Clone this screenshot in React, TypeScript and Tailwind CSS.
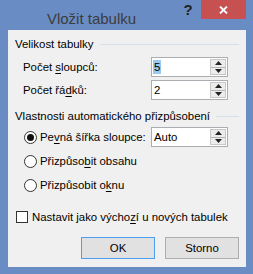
import React from "react";

const font = { fontFamily: "'Liberation Sans', Arial, sans-serif" };

function U({ children }: { children: React.ReactNode }) {
  return <span className="underline underline-offset-2">{children}</span>;
}

function SpinBox({ value, selected }: { value: string; selected?: boolean }) {
  return (
    <div className="flex h-[20px] w-[77px] flex-none items-stretch border border-[#abadb3] bg-white">
      <div className="flex flex-1 items-center pl-[1px]">
        <span className={selected ? "bg-[#99c9ef] px-[1px] leading-[14px]" : "px-[1px] leading-[14px]"}>{value}</span>
      </div>
      <div className="my-[1px] mr-[1px] flex w-[16px] flex-col border border-[#c8c8c8] bg-[#ececec]">
        <div className="flex flex-1 items-center justify-center border-b border-[#b4b4b4]">
          <svg width="7" height="4" viewBox="0 0 7 4">
            <path d="M3.5 0 L7 4 L0 4 Z" fill="#222" />
          </svg>
        </div>
        <div className="flex flex-1 items-center justify-center">
          <svg width="7" height="4" viewBox="0 0 7 4">
            <path d="M0 0 L7 0 L3.5 4 Z" fill="#222" />
          </svg>
        </div>
      </div>
    </div>
  );
}

function Radio({ checked, children }: { checked?: boolean; children: React.ReactNode }) {
  return (
    <div className="flex items-center pl-[9px]">
      <div className="flex h-[13px] w-[13px] flex-none items-center justify-center rounded-full border border-[#333] bg-white">
        {checked && <div className="h-[7px] w-[7px] rounded-full bg-[#111]" />}
      </div>
      <span className="ml-[3px] whitespace-nowrap">{children}</span>
    </div>
  );
}

function GroupHeader({ title }: { title: string }) {
  return (
    <div className="flex h-[16px] items-center">
      <span className="whitespace-nowrap">{title}</span>
      <div className="ml-[6px] h-px flex-1 bg-[#d5dfe5]" />
    </div>
  );
}

export default function App() {
  return (
    <div className="flex h-[274px] w-[253px] flex-col bg-[#6a8cc4] text-[11.4px] leading-[16px] text-black" style={font}>
      {/* title bar */}
      <div className="flex h-[30px] items-start">
        <div className="flex h-[27px] flex-1 items-end justify-center pl-[8px] text-[15px] text-[#3c3c3c]">
          Vložit tabulku
        </div>
        <div className="flex h-[19px] w-[26px] items-center justify-center text-[15px] font-bold text-[#222]">?</div>
        <div className="mr-[7px] flex h-[19px] w-[45px] items-center justify-center bg-[#c75050]">
          <svg width="9" height="8" viewBox="0 0 9 8">
            <path d="M1 0.5 L8 7.5 M8 0.5 L1 7.5" stroke="#fff" strokeWidth="1.8" />
          </svg>
        </div>
      </div>

      {/* client area */}
      <div className="mb-[7px] ml-[8px] mr-[7px] flex flex-1 flex-col bg-[#f0f0f0] px-[7px] pt-[6px]">
        <GroupHeader title="Velikost tabulky" />
        <div className="mt-[5px] flex h-[20px] items-center pl-[8px]">
          <span className="w-[128px] whitespace-nowrap">
            Počet <U>s</U>loupců:
          </span>
          <SpinBox value="5" selected />
        </div>
        <div className="mt-[3px] flex h-[20px] items-center pl-[8px]">
          <span className="w-[128px] whitespace-nowrap">
            Počet řá<U>d</U>ků:
          </span>
          <SpinBox value="2" />
        </div>

        <div className="mt-[8px]">
          <GroupHeader title="Vlastnosti automatického přizpůsobení" />
        </div>
        <div className="mt-[3px] flex h-[20px] items-center">
          <div className="w-[136px] flex-none">
            <Radio checked>
              Pe<U>v</U>ná šířka sloupce:
            </Radio>
          </div>
          <SpinBox value="Auto" />
        </div>
        <div className="mt-[4px] flex h-[20px] items-center">
          <Radio>
            Přizpůso<U>b</U>it obsahu
          </Radio>
        </div>
        <div className="mt-[4px] flex h-[20px] items-center">
          <Radio>
            Přizpůsobit o<U>k</U>nu
          </Radio>
        </div>

        <div className="mt-[12px] flex h-[20px] items-center pl-[1px]">
          <div className="h-[12px] w-[12px] flex-none border border-[#333] bg-white" />
          <span className="ml-[4px] whitespace-nowrap">
            Nastavit jako výcho<U>z</U>í u nových tabulek
          </span>
        </div>

        <div className="mt-[10px] flex justify-end gap-[10px]">
          <button className="flex h-[22px] w-[74px] items-center justify-center border border-[#4ca0f0] bg-[#e1e1e1]">OK</button>
          <button className="flex h-[22px] w-[74px] items-center justify-center border border-[#adadad] bg-[#e1e1e1]">Storno</button>
        </div>
      </div>
    </div>
  );
}
